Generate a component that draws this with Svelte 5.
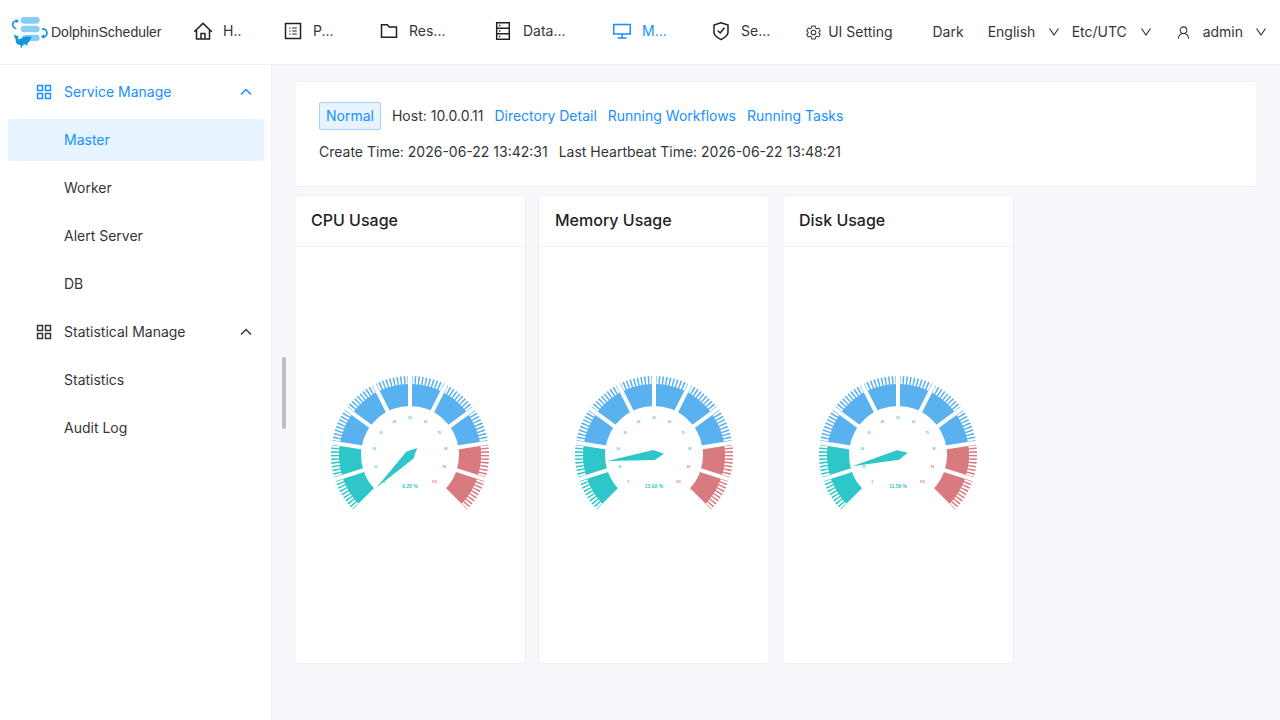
<script>
	const nav = [
		{ icon: 'home', label: 'H..' },
		{ icon: 'project', label: 'P...' },
		{ icon: 'folder', label: 'Res...' },
		{ icon: 'database', label: 'Data...' },
		{ icon: 'monitor', label: 'M...' },
		{ icon: 'security', label: 'Se...' }
	]

	const menu = [
		{ label: 'Service Manage', items: ['Master', 'Worker', 'Alert Server', 'DB'] },
		{ label: 'Statistical Manage', items: ['Statistics', 'Audit Log'] }
	]

	const gauges = [
		{ title: 'CPU Usage', value: 0.25 },
		{ title: 'Memory Usage', value: 13.92 },
		{ title: 'Disk Usage', value: 11.59 }
	]

	let active_nav = $state('monitor')
	let active_group = $state('Service Manage')
	let active_item = $state('Master')
	const opened = $state({ 'Service Manage': true, 'Statistical Manage': true })

	// gauge runs clockwise from 225deg over 270deg
	const R = 79
	const TEAL = '#2ec7c9'
	const BLUE = '#5ab1ef'
	const RED = '#d87a80'

	function point(value, r) {
		const a = (225 - value * 2.7) * Math.PI / 180
		return [r * Math.cos(a), -r * Math.sin(a)]
	}

	function arc(from, to) {
		const r = R - 15
		const large = to - from > 66 ? 1 : 0
		return `M${point(from, r)}A${r} ${r} 0 ${large} 1 ${point(to, r)}`
	}

	function line(value, length) {
		return `M${point(value, R + 1)}L${point(value, R - length)}`
	}

	function color(value) {
		if (value <= 20) return TEAL
		return value <= 80 ? BLUE : RED
	}

	function anchor(value) {
		const x = point(value, 1)[0]
		if (x < -0.4) return 'start'
		return x > 0.4 ? 'end' : 'middle'
	}

	// labels near the top hang below their point
	function baseline(value) {
		const y = point(value, 38)[1]
		return y < -30 ? y + 2 : y + 1
	}

	const steps = Array.from({ length: 11 }, (_, i) => i * 10)
	const ticks = Array.from({ length: 101 }, (_, i) => i)
</script>

{#snippet chevron(up)}
	<svg class="chevron" viewBox="0 0 12 12" aria-hidden="true">
		<path d={up ? 'M1 8.5L6 3.5L11 8.5' : 'M1.5 2.5L6 9L10.5 2.5'} />
	</svg>
{/snippet}

<div class="page">
	<header>
		<a class="logo" href="#home">
			<svg viewBox="36 48 108 96" aria-hidden="true">
				<g fill="#86cef3">
					<rect x="62" y="51" width="57" height="20" rx="10" />
					<rect x="62" y="77" width="57" height="20" rx="10" />
					<rect x="66" y="104" width="53" height="19" rx="9" />
				</g>
				<g fill="none" stroke="#1297dc" stroke-width="5">
					<path d="M49 86C41 84 38 79 38 74C38 67 42 63 49 63" />
					<path d="M126 87C135 86 141 91 141 99C141 107 135 111 127 110" />
				</g>
				<path fill="#1297dc" d="M46 56L57 62L49 70ZM132 102L123 110L133 116Z" />
				<path fill="#1297dc" d="M41 102C44 107 50 107 56 109C54 112 54 115 55 118C61 118 66 111 76 110C84 109 91 110 97 110C92 112 95 115 91 119C88 125 84 129 81 131L84 138L75 133C70 133 67 137 64 145C61 141 61 138 62 135C53 134 47 130 47 122C47 117 46 114 43 111Z" />
			</svg>
			<span>DolphinScheduler</span>
		</a>

		<nav class="top-nav">
			{#each nav as { icon, label }}
			<a href="#{icon}" class:active={active_nav === icon} onclick={() => { active_nav = icon }}>
				<svg viewBox="0 0 20 20" aria-hidden="true">
					{#if icon === 'home'}
					<path d="M1.2 10.8L10 2.4L18.8 10.8M3.5 9V18H16.5V9M8 18V12.5H12V18" />
					{:else if icon === 'project'}
					<path d="M2.5 2.5H17.5V17.5H2.5Z" />
					<path class="thin" d="M9.2 7H13.8M9.2 10H13.8M9.2 13H13.8M6.2 7H7.6M6.2 10H7.6M6.2 13H7.6" />
					{:else if icon === 'folder'}
					<path d="M2.5 3.7H8.2L10.3 6H17.5V16.3H2.5Z" />
					{:else if icon === 'database'}
					<path d="M3.7 1.7H16.3V18.3H3.7ZM3.7 7.2H16.3M3.7 12.8H16.3" />
					<path d="M6 4.5H7.4M6 10H7.4M6 15.5H7.4" />
					{:else if icon === 'monitor'}
					<path d="M1.7 3.5H18.3V13H1.7ZM10 13V17M5.5 17H14.5" />
					{:else}
					<path d="M10 1.7L17 4V11.5C17 14.5 13.7 16.6 10 18.6C6.3 16.6 3 14.5 3 11.5V4Z" />
					<path d="M6.7 9.5L9.2 12L13.4 6.8" />
					{/if}
				</svg>
				<span>{label}</span>
			</a>
			{/each}
		</nav>

		<div class="tools">
			<button class="ui-setting">
				<svg class="icon-sm" viewBox="0 0 16 16" aria-hidden="true">
					<path d="M6.3 1.1H9.7L10.2 3.2L11.5 4L13.6 3.3L15.2 6.2L13.7 7.7V8.5L15.2 9.9L13.6 12.7L11.5 12.1L10.2 12.9L9.7 15H6.3L5.8 12.9L4.5 12.1L2.4 12.7L.8 9.9L2.3 8.5V7.7L.8 6.2L2.4 3.3L4.5 4L5.8 3.2Z" />
					<circle cx="8" cy="8" r="2.5" />
				</svg>
				UI Setting
			</button>
			<button class="theme">Dark</button>
			<label class="picker language">
				<select aria-label="Language"><option>English</option></select>
				{@render chevron(false)}
			</label>
			<label class="picker timezone">
				<select aria-label="Time zone"><option>Etc/UTC</option></select>
				{@render chevron(false)}
			</label>
			<button class="user">
				<svg class="icon-sm" viewBox="0 0 16 16" aria-hidden="true">
					<circle cx="8" cy="5.5" r="3.5" />
					<path d="M2.5 14.5C2.8 11 4.8 9 8 9S13.2 11 13.5 14.5" />
				</svg>
				<span>admin</span>
				{@render chevron(false)}
			</button>
		</div>
	</header>

	<div class="body">
		<aside>
			{#each menu as group}
			<button
				class="group"
				class:active={active_group === group.label}
				aria-expanded={opened[group.label]}
				onclick={() => { opened[group.label] = !opened[group.label] }}>
				<svg class="grid-icon" viewBox="0 0 16 16" aria-hidden="true">
					<path d="M1.5 1.5H6.5V6.5H1.5ZM9.5 1.5H14.5V6.5H9.5ZM1.5 9.5H6.5V14.5H1.5ZM9.5 9.5H14.5V14.5H9.5Z" />
				</svg>
				<span>{group.label}</span>
				{@render chevron(opened[group.label])}
			</button>
			{#if opened[group.label]}
			{#each group.items as item}
			<a
				class="item"
				class:active={active_item === item}
				href="#{item}"
				onclick={() => {
					active_item = item
					active_group = group.label
				}}>{item}</a>
			{/each}
			{/if}
			{/each}
			<button class="handle" aria-label="Collapse menu"></button>
		</aside>

		<main>
			<section class="card info">
				<div class="row">
					<span class="tag">Normal</span>
					<span>Host: 10.0.0.11</span>
					<a href="#directory">Directory Detail</a>
					<a href="#workflows">Running Workflows</a>
					<a href="#tasks">Running Tasks</a>
				</div>
				<div class="row">
					<span>Create Time: 2026-06-22 13:42:31</span>
					<span>Last Heartbeat Time: 2026-06-22 13:48:21</span>
				</div>
			</section>

			<div class="gauges">
				{#each gauges as { title, value }}
				<section class="card">
					<h2>{title}</h2>
					<svg class="gauge" viewBox="-115 -208 230 416">
						<g fill="none" stroke-width="30">
							<path d={arc(0, 20)} stroke={TEAL} />
							<path d={arc(20, 80)} stroke={BLUE} />
							<path d={arc(80, 100)} stroke={RED} />
						</g>
						<g stroke="#fff">
							{#each ticks as t}
							<path d={line(t, 8)} stroke-width="2" />
							{/each}
							{#each steps as s}
							<path d={line(s, 31)} stroke-width="4" />
							{/each}
						</g>
						{#each steps as s}
						<text class="scale" x={point(s, 38)[0]} y={baseline(s)} fill={color(s)} text-anchor={anchor(s)}>{s}</text>
						{/each}
						<path d="M-10 0L0 -5L47 0L0 5Z" fill={color(value)} transform="rotate({value * 2.7 - 225})" />
						<text class="value" x="0" y="33" fill={color(value)} text-anchor="middle">{value} %</text>
					</svg>
				</section>
				{/each}
			</div>
		</main>
	</div>
</div>

<style>
:global(body) {
	margin: 0;
	background: #f8f8fc;
}
* {
	box-sizing: border-box;
}
.page {
	display: flex;
	flex-direction: column;
	min-height: 100vh;
	font: 14px/22px Inter, sans-serif;
	color: #333639;
}
a {
	color: inherit;
	text-decoration: none;
}
button, select {
	font: inherit;
	color: inherit;
	background: none;
	border: 0;
	padding: 0;
	cursor: pointer;
}
select {
	appearance: none;
}
svg {
	flex: none;
	fill: none;
}
header {
	display: flex;
	align-items: center;
	height: 65px;
	padding: 0 13px 0 12px;
	background: #fff;
	border-bottom: 1px solid #efeff5;
}
.logo {
	display: flex;
	align-items: center;
	gap: 3px;
	width: 181px;
	font-family: "Liberation Sans", sans-serif;
}
.logo svg {
	width: 36px;
	height: 32px;
}
.top-nav {
	display: grid;
	grid-template-columns: 90px 96px 114px 119px 99px 60px;
	padding-bottom: 2px;
}
.top-nav a {
	display: flex;
	align-items: center;
	gap: 10px;
}
.top-nav svg {
	width: 20px;
	height: 20px;
	stroke: #1f2225;
	stroke-width: 1.5;
}
.thin {
	stroke-width: 1.2;
}
.active, .top-nav .active svg {
	color: #1890ff;
	stroke: #1890ff;
}
.tools {
	display: flex;
	align-items: center;
	margin-left: auto;
}
.tools button, .picker {
	display: flex;
	align-items: center;
}
.tools .ui-setting {
	gap: 7px;
	margin-right: 40px;
}
.tools .theme {
	margin-right: 24px;
}
.icon-sm {
	width: 15px;
	height: 15px;
	stroke: currentColor;
	stroke-width: 1.1;
}
.picker {
	gap: 12px;
}
.language {
	margin-right: 12px;
}
.timezone {
	margin-right: 24px;
}
.user {
	gap: 12px;
}
.chevron {
	width: 12px;
	height: 12px;
	stroke: currentColor;
	stroke-width: 1.2;
}
.body {
	display: flex;
	flex: 1;
}
aside {
	position: relative;
	display: flex;
	flex-direction: column;
	gap: 6px;
	width: 272px;
	padding: 6px 7px 6px 8px;
	background: #fff;
	border-right: 1px solid #efeff5;
}
.group, .item {
	display: flex;
	align-items: center;
	height: 42px;
	border-radius: 3px;
}
.group {
	gap: 12px;
	padding: 0 12px 0 28px;
}
.group .chevron {
	margin-left: auto;
	stroke-width: 1.5;
}
.grid-icon {
	width: 16px;
	height: 16px;
	stroke: currentColor;
	stroke-width: 1.5;
}
.item {
	padding-left: 56px;
}
/* the label colour comes from .active, without its stroke */
.item.active {
	background: #e7f3ff;
	stroke: none;
}
.handle {
	position: absolute;
	top: calc(50% - 36px);
	right: -15px;
	width: 4px;
	height: 72px;
	border-radius: 2px;
	background: #bfbfbf;
}
main {
	flex: 1;
	padding: 16px 22px;
}
.card {
	background: #fff;
	border: 1px solid #efeff5;
	border-radius: 3px;
}
.info {
	display: flex;
	flex-direction: column;
	gap: 8px;
	padding: 20px 24px;
}
.row {
	display: flex;
	align-items: center;
	gap: 11px;
	min-height: 28px;
}
.row a {
	color: #1890ff;
}
.tag {
	padding: 2px 6px;
	color: #1890ff;
	background: #e7f3ff;
	border: 1px solid #a3d3ff;
	border-radius: 2px;
}
.gauges {
	display: grid;
	grid-template-columns: repeat(4, 1fr);
	gap: 12px;
	margin-top: 8px;
}
h2 {
	margin: 0;
	padding: 12px 16px 14px;
	font-size: 16px;
	line-height: 24px;
	font-weight: 500;
	color: #1f2225;
	border-bottom: 1px solid #efeff5;
}
.gauge {
	display: block;
	width: 100%;
	height: 416px;
}
.scale {
	font-size: 3px;
}
.value {
	font-size: 5px;
}
.scale, .value {
	font-family: "Liberation Sans", sans-serif;
	font-weight: 700;
}
</style>
